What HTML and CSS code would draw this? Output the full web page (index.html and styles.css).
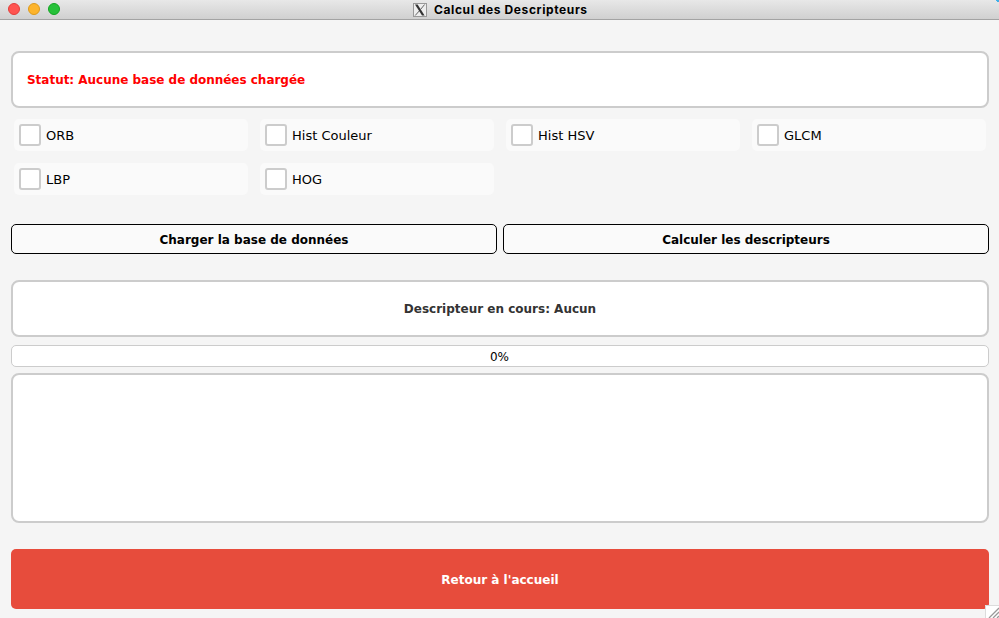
FILE: index.html
```html
<!DOCTYPE html>
<html lang="fr">
<head>
<meta charset="utf-8">
<title>Calcul des Descripteurs</title>
<link rel="stylesheet" href="styles.css">
</head>
<body>
<header class="titlebar">
  <div class="lights"><i class="light red"></i><i class="light yellow"></i><i class="light green"></i></div>
  <svg class="logo" width="14" height="14" viewBox="0 0 14 14"><rect x=".5" y=".5" width="13" height="13" fill="#eee" stroke="#999"/><path d="M2 1.5h2.6l7 11H9z" fill="#333"/><path d="M11.6 1.5L7.6 6.4M6.2 8L2.2 12.5" stroke="#555" stroke-width=".9"/></svg>
  <h1 class="title">Calcul des Descripteurs</h1>
  <i class="corner"></i>
</header>
<main class="content">
  <div class="panel status">Statut: Aucune base de données chargée</div>
  <div class="options">
    <label class="option"><span class="box"></span>ORB</label>
    <label class="option"><span class="box"></span>Hist Couleur</label>
    <label class="option"><span class="box"></span>Hist HSV</label>
    <label class="option"><span class="box"></span>GLCM</label>
    <label class="option"><span class="box"></span>LBP</label>
    <label class="option"><span class="box"></span>HOG</label>
  </div>
  <div class="actions">
    <button class="action">Charger la base de données</button>
    <button class="action">Calculer les descripteurs</button>
  </div>
  <div class="panel current">Descripteur en cours: Aucun</div>
  <div class="progress">0%</div>
  <div class="log"></div>
  <button class="back">Retour à l'accueil</button>
</main>
<svg class="grip" width="14" height="13" viewBox="0 0 14 13"><rect width="14" height="13" fill="#fff"/><path d="M.5 13V.5H14" fill="none" stroke="#dcdcdc"/><path d="M4 13L14 3M8 13L14 7M12 13L14 11" stroke="#999" stroke-width="1.3"/></svg>
</body>
</html>
```
FILE: styles.css
```css
* { box-sizing: border-box; }
body {
  margin: 0;
  height: 618px;
  overflow: hidden;
  position: relative;
  background: #f5f5f5;
  color: #000;
  font: 13px "DejaVu Sans", sans-serif;
}
.titlebar {
  height: 20px;
  display: flex;
  justify-content: center;
  gap: 7px;
  align-items: center;
  padding-left: 2px;
  border-bottom: 1px solid #a3a3a3;
  background: linear-gradient(#e8e8e8, #d0d0d0);
}
.lights { position: absolute; left: 8px; top: 3px; display: flex; gap: 8px; }
.light { width: 12px; height: 12px; border-radius: 50%; border: 1px solid; }
.red { background: #ff5450; border-color: #e33e3a; }
.yellow { background: #fdb42b; border-color: #dd9a1a; }
.green { background: #27c13a; border-color: #12a522; }
.title { margin: 0; font: bold 12px/16px Inter, sans-serif; letter-spacing: 0.6px; width: 154px; white-space: nowrap; }
.corner {
  position: absolute;
  top: 0;
  right: 0;
  width: 3px;
  height: 3px;
  background: linear-gradient(225deg, #3eb0e8 50%, transparent 50%);
}
.content { padding: 31px 10px 0 11px; }
.panel {
  height: 57px;
  border: 2px solid #ccc;
  border-radius: 8px;
  background: #fff;
  display: flex;
  align-items: center;
  font-size: 12px;
  font-weight: bold;
}
.status { padding-left: 14px; color: #f00; letter-spacing: -0.02px; }
.options {
  display: grid;
  grid-template-columns: repeat(4, 234px);
  gap: 12px;
  padding: 11px 3px 0;
}
.option {
  height: 32px;
  border-radius: 5px;
  background: #fafafa;
  display: flex;
  align-items: center;
  gap: 5px;
  padding-left: 5px;
}
.box { width: 22px; height: 22px; border: 2px solid #ccc; border-radius: 3px; background: #fff; }
.actions { display: flex; gap: 6px; margin-top: 29px; }
.action {
  flex: 1;
  height: 30px;
  padding: 2px 0 0;
  border: 1px solid #000;
  border-radius: 5px;
  background: #fafafa;
  color: #000;
  font: bold 12px "DejaVu Sans", sans-serif;
}
.current { margin-top: 26px; justify-content: center; color: #333; }
.progress {
  height: 22px;
  margin-top: 8px;
  padding-right: 1px;
  border: 1px solid #ccc;
  border-radius: 5px;
  background: #fff;
  text-align: center;
  font-size: 12px;
  line-height: 22px;
}
.log { height: 150px; margin-top: 6px; border: 2px solid #ccc; border-radius: 8px; background: #fff; }
.back {
  display: block;
  width: 100%;
  height: 60px;
  margin-top: 26px;
  padding: 2px 0 0;
  border: 0;
  border-radius: 5px;
  background: #e74c3c;
  color: #fff;
  font: bold 12px "DejaVu Sans", sans-serif;
}
.grip { position: absolute; right: 0; bottom: 0; }
```
